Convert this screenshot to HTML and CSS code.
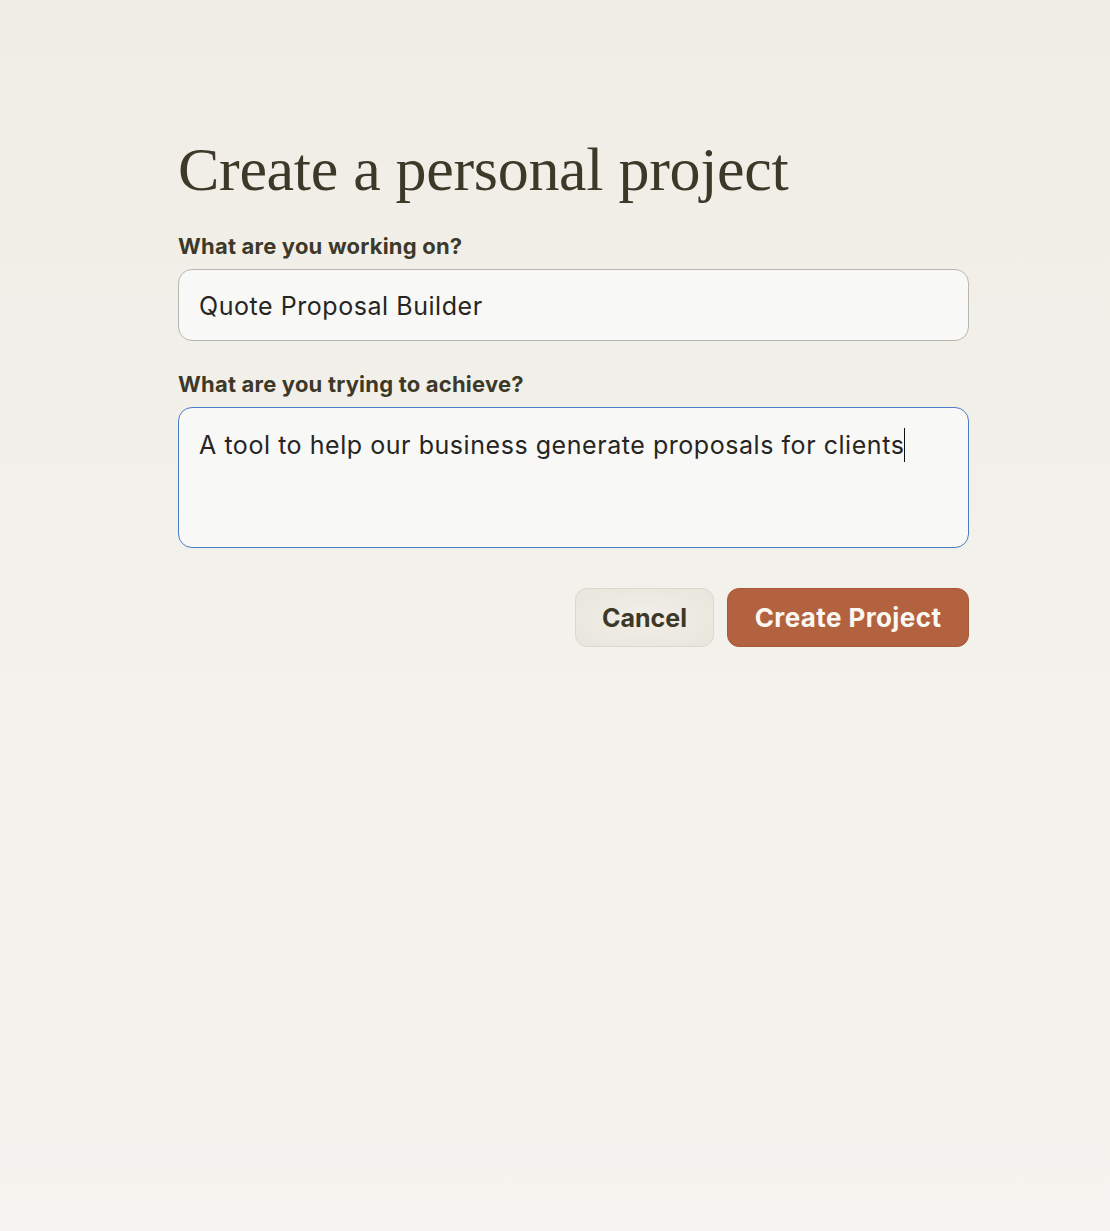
FILE: index.html
```html
<!DOCTYPE html>
<html lang="en">
<head>
<meta charset="utf-8">
<title>Create a personal project</title>
<link rel="stylesheet" href="styles.css">
</head>
<body>
<main class="page">
  <form class="form">
    <h1 class="title">Create a personal project</h1>
    <label class="field">
      <span class="label">What are you working on?</span>
      <span class="input">Quote Proposal Builder</span>
    </label>
    <label class="field">
      <span class="label">What are you trying to achieve?</span>
      <span class="textarea">A tool to help our business generate proposals for clients<span class="caret"></span></span>
    </label>
    <div class="actions">
      <button type="button" class="btn btn-cancel">Cancel</button>
      <button type="button" class="btn btn-primary">Create Project</button>
    </div>
  </form>
</main>
</body>
</html>
```
FILE: styles.css
```css
html, body {
  margin: 0;
  padding: 0;
}
body {
  min-height: 1231px;
  background: linear-gradient(180deg, #f0ede6 0%, #f3f2ec 60%, #f4f3ef 100%);
  font-family: "Inter", "Liberation Sans", sans-serif;
  color: #3d3929;
}
.page {
  display: flex;
  justify-content: flex-start;
  padding: 134px 0 0 178px;
}
.form {
  width: 791px;
  display: flex;
  flex-direction: column;
}
.title {
  margin: 0 0 29px;
  font-family: "Liberation Serif", "DejaVu Serif", serif;
  font-weight: 400;
  font-size: 62px;
  line-height: 70px;
  color: #3d3929;
  letter-spacing: -0.3px;
}
.field {
  display: flex;
  flex-direction: column;
  gap: 10px;
  margin-bottom: 30px;
}
.label {
  font-weight: 700;
  font-size: 22px;
  line-height: 26px;
  color: #3d3929;
  letter-spacing: 0.2px;
}
.input, .textarea {
  box-sizing: border-box;
  background: #f8f8f7;
  border: 1px solid #b8b6b0;
  border-radius: 14px;
  padding: 0 20px;
  font-size: 25px;
  letter-spacing: 0.55px;
  color: #262522;
}
.input {
  height: 72px;
  display: flex;
  align-items: center;
  padding-top: 2px;
}
.textarea {
  height: 141px;
  padding-top: 20px;
  line-height: 34px;
  border-color: #4a7cc5;
}
.caret {
  display: inline-block;
  width: 1px;
  height: 34px;
  background: #111;
  vertical-align: top;
}
.actions {
  display: flex;
  justify-content: flex-end;
  gap: 13px;
  margin-top: 10px;
}
.btn {
  height: 59px;
  border-radius: 12px;
  font-family: "Inter", "Liberation Sans", sans-serif;
  font-weight: 700;
  padding: 0;
  cursor: pointer;
}
.btn-cancel {
  width: 139px;
  font-size: 25px;
  background: radial-gradient(ellipse at center, #f1efe8 0%, #e8e5dc 100%);
  border: 1px solid #dcd8cc;
  color: #3d3929;
}
.btn-primary {
  width: 242px;
  font-size: 26px;
  letter-spacing: 0.4px;
  background: #b3623f;
  border: 1px solid #a9583a;
  color: #fbf7f2;
}
```
